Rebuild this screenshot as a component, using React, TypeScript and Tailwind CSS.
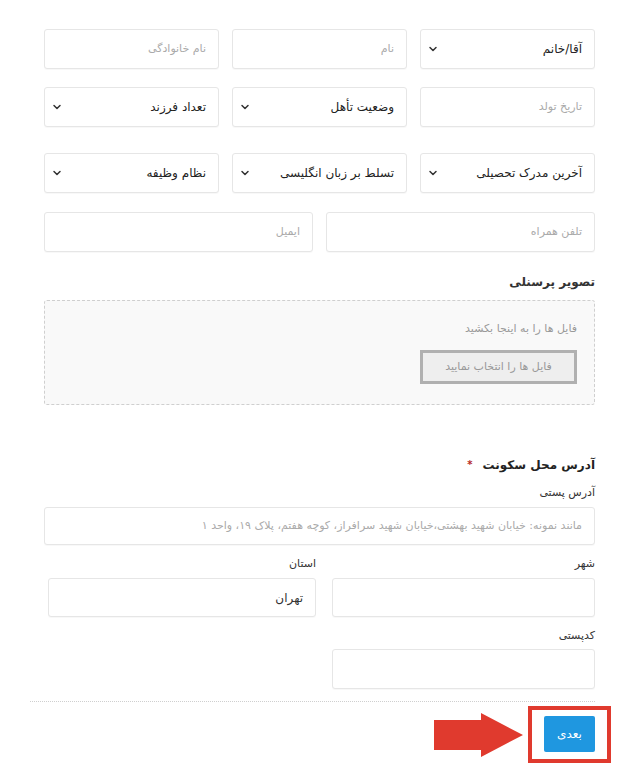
import { ChevronDown } from 'lucide-react';

const font = { fontFamily: '"DejaVu Sans", "Noto Sans", sans-serif' };

function Field({ placeholder, value, className = 'h-10' }: { placeholder?: string; value?: string; className?: string }) {
  return (
    <div className={`flex items-center rounded-[3px] border border-[#e6e6e6] bg-white px-3 shadow-[0_1px_1px_rgba(0,0,0,0.03)] ${className}`}>
      {value ? (
        <span className="text-[12px] text-[#333]">{value}</span>
      ) : (
        <span className="text-[11px] text-[#aaa]">{placeholder}</span>
      )}
    </div>
  );
}

function Select({ label }: { label: string }) {
  return (
    <div className="flex h-10 items-center justify-between rounded-[3px] border border-[#e6e6e6] bg-white pl-[6px] pr-3 shadow-[0_1px_1px_rgba(0,0,0,0.03)]">
      <span className="text-[12px] text-[#222]">{label}</span>
      <ChevronDown className="h-3 w-3 text-[#333]" strokeWidth={3} />
    </div>
  );
}

export default function App() {
  return (
    <div dir="rtl" className="min-h-[783px] w-[625px] bg-white pt-[29px]" style={font}>
      <div className="ml-[44px] mr-[30px]">
        <div className="grid grid-cols-3 gap-[13px]">
          <Select label="آقا/خانم" />
          <Field placeholder="نام" />
          <Field placeholder="نام خانوادگی" />
        </div>
        <div className="mt-[18px] grid grid-cols-3 gap-[13px]">
          <Field placeholder="تاریخ تولد" />
          <Select label="وضعیت تأهل" />
          <Select label="تعداد فرزند" />
        </div>
        <div className="mt-[26px] grid grid-cols-3 gap-[13px]">
          <Select label="آخرین مدرک تحصیلی" />
          <Select label="تسلط بر زبان انگلیسی" />
          <Select label="نظام وظیفه" />
        </div>
        <div className="mt-[19px] grid grid-cols-2 gap-[13px]">
          <Field placeholder="تلفن همراه" />
          <Field placeholder="ایمیل" />
        </div>

        <h3 className="mt-[22px] text-[12px] font-bold leading-4 text-[#333]">تصویر پرسنلی</h3>
        <div className="mt-[10px] h-[105px] rounded-[3px] border border-dashed border-[#cfcfcf] bg-[#f9f9f9] pr-[17px] pt-[20px]">
          <p className="text-[11px] leading-4 text-[#999]">فایل ها را به اینجا بکشید</p>
          <div className="mt-[13px] flex">
            <button className="flex h-[34px] w-[157px] items-center justify-center border-[3px] border-[#b0b0b0] bg-[#eeeeee] text-[11px] text-[#999]">
              فایل ها را انتخاب نمایید
            </button>
          </div>
        </div>

        <h3 className="mt-[52px] flex items-center gap-[10px] text-[12px] font-bold leading-4 text-[#222]">
          آدرس محل سکونت
          <span className="text-[10px] text-[#b5281f]">*</span>
        </h3>
        <label className="mt-[12px] block text-[11px] leading-4 text-[#333]">آدرس پستی</label>
        <div className="mt-[6px]">
          <Field className="h-[38px]" placeholder="مانند نمونه: خیابان شهید بهشتی،خیابان شهید سرافراز، کوچه هفتم، پلاک ۱۹، واحد ۱" />
        </div>

        <div className="mt-[11px] grid grid-cols-[263px_268px] gap-[16px]">
          <div>
            <label className="block text-[11px] leading-4 text-[#333]">شهر</label>
            <div className="mt-[6px]">
              <Field className="h-[39px]" />
            </div>
            <label className="mt-[11px] block text-[11px] leading-4 text-[#333]">کدپستی</label>
            <div className="mt-[5px]">
              <Field className="h-10" />
            </div>
          </div>
          <div>
            <label className="block text-[11px] leading-4 text-[#333]">استان</label>
            <div className="mt-[6px]">
              <Field className="h-[39px]" value="تهران" />
            </div>
          </div>
        </div>
      </div>

      <div className="ml-[30px] mr-[30px] mt-[12px] border-t border-dotted border-[#cfcfcf]" />

      <div className="mr-[14px] mt-[4px] flex items-center gap-[5px]">
        <div className="border-4 border-[#e03a2e] px-[12px] pb-[7px] pt-[6px]">
          <button className="flex h-[36px] w-[51px] items-center justify-center rounded-[2px] bg-[#1f97e0] text-[12px] text-white">
            بعدی
          </button>
        </div>
        <svg width="89" height="44" viewBox="0 0 89 44">
          <path d="M0 7 H47 V0 L89 22 L47 44 V37 H0 Z" fill="#e03a2e" />
        </svg>
      </div>
    </div>
  );
}
